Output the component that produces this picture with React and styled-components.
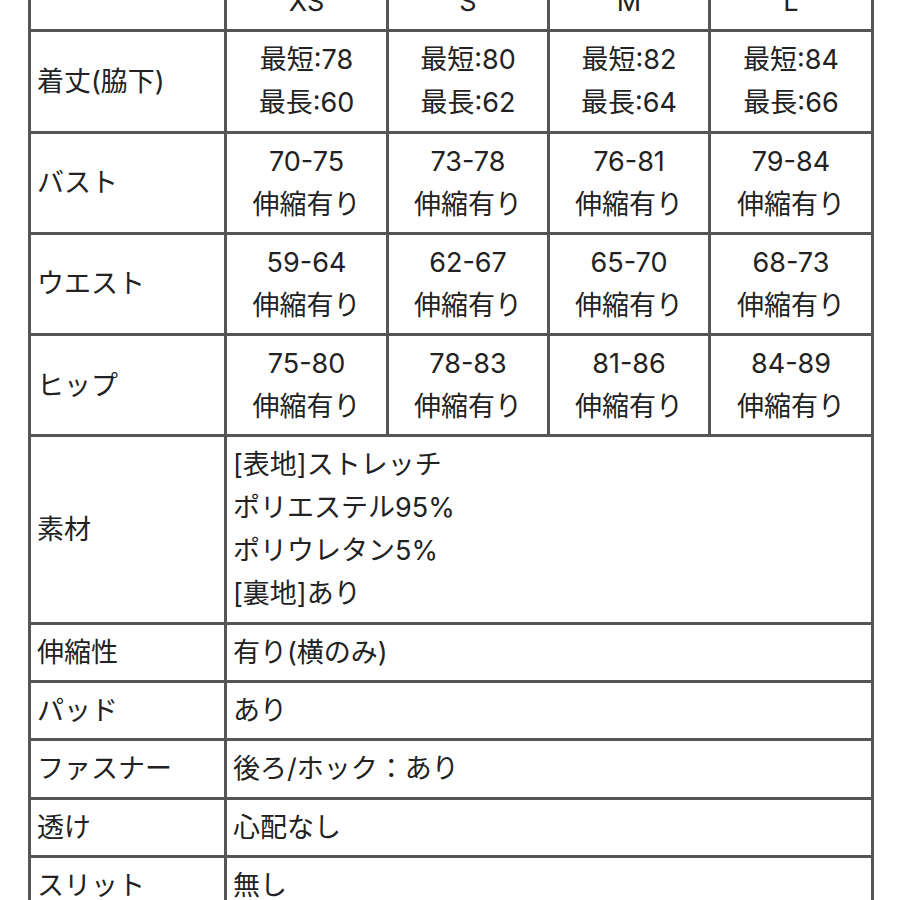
import React from 'react';
import styled, { createGlobalStyle } from 'styled-components';

const GlobalStyle = createGlobalStyle`
  html, body {
    margin: 0;
    padding: 0;
    background: #ffffff;
  }
  body {
    font-family: "Inter", "Noto Sans CJK JP", sans-serif;
    color: #222222;
    overflow: hidden;
  }
`;

const Page = styled.div`
  width: 900px;
  height: 900px;
  overflow: hidden;
  padding-left: 28px;
  box-sizing: border-box;
`;

const Table = styled.table`
  margin-top: -29px;
  width: 843px;
  table-layout: fixed;
  border-collapse: collapse;
  font-size: 27px;
  line-height: 43px;
`;

const Col = styled.col`
  width: ${(p) => p.$w}px;
`;

const Cell = styled.td`
  border: 3px solid #555555;
  padding: 6px 6px 6.3px;
  vertical-align: middle;
  text-align: ${(p) => (p.$center ? 'center' : 'left')};
  white-space: nowrap;
  overflow: hidden;
`;

const Line = styled.div`
  display: block;
`;

const sizes = ['XS', 'S', 'M', 'L'];
const colWidths = [196, 162, 161, 161, 163];

const measureRows = [
  {
    label: '着丈(脇下)',
    values: [
      ['最短:78', '最長:60'],
      ['最短:80', '最長:62'],
      ['最短:82', '最長:64'],
      ['最短:84', '最長:66'],
    ],
  },
  {
    label: 'バスト',
    values: [
      ['70-75', '伸縮有り'],
      ['73-78', '伸縮有り'],
      ['76-81', '伸縮有り'],
      ['79-84', '伸縮有り'],
    ],
  },
  {
    label: 'ウエスト',
    values: [
      ['59-64', '伸縮有り'],
      ['62-67', '伸縮有り'],
      ['65-70', '伸縮有り'],
      ['68-73', '伸縮有り'],
    ],
  },
  {
    label: 'ヒップ',
    values: [
      ['75-80', '伸縮有り'],
      ['78-83', '伸縮有り'],
      ['81-86', '伸縮有り'],
      ['84-89', '伸縮有り'],
    ],
  },
];

const infoRows = [
  {
    label: '素材',
    lines: ['[表地]ストレッチ', 'ポリエステル95%', 'ポリウレタン5%', '[裏地]あり'],
  },
  { label: '伸縮性', lines: ['有り(横のみ)'] },
  { label: 'パッド', lines: ['あり'] },
  { label: 'ファスナー', lines: ['後ろ/ホック：あり'] },
  { label: '透け', lines: ['心配なし'] },
  { label: 'スリット', lines: ['無し'] },
];

const Lines = ({ items }) => items.map((t, i) => <Line key={i}>{t}</Line>);

export default function App() {
  return (
    <Page>
      <GlobalStyle />
      <Table>
        <colgroup>
          {colWidths.map((w, i) => (
            <Col key={i} $w={w} />
          ))}
        </colgroup>
        <tbody>
          <tr>
            <Cell />
            {sizes.map((s) => (
              <Cell key={s} $center>
                {s}
              </Cell>
            ))}
          </tr>
          {measureRows.map((row) => (
            <tr key={row.label}>
              <Cell>{row.label}</Cell>
              {row.values.map((v, i) => (
                <Cell key={i} $center>
                  <Lines items={v} />
                </Cell>
              ))}
            </tr>
          ))}
          {infoRows.map((row) => (
            <tr key={row.label}>
              <Cell>{row.label}</Cell>
              <Cell colSpan={4}>
                <Lines items={row.lines} />
              </Cell>
            </tr>
          ))}
        </tbody>
      </Table>
    </Page>
  );
}
